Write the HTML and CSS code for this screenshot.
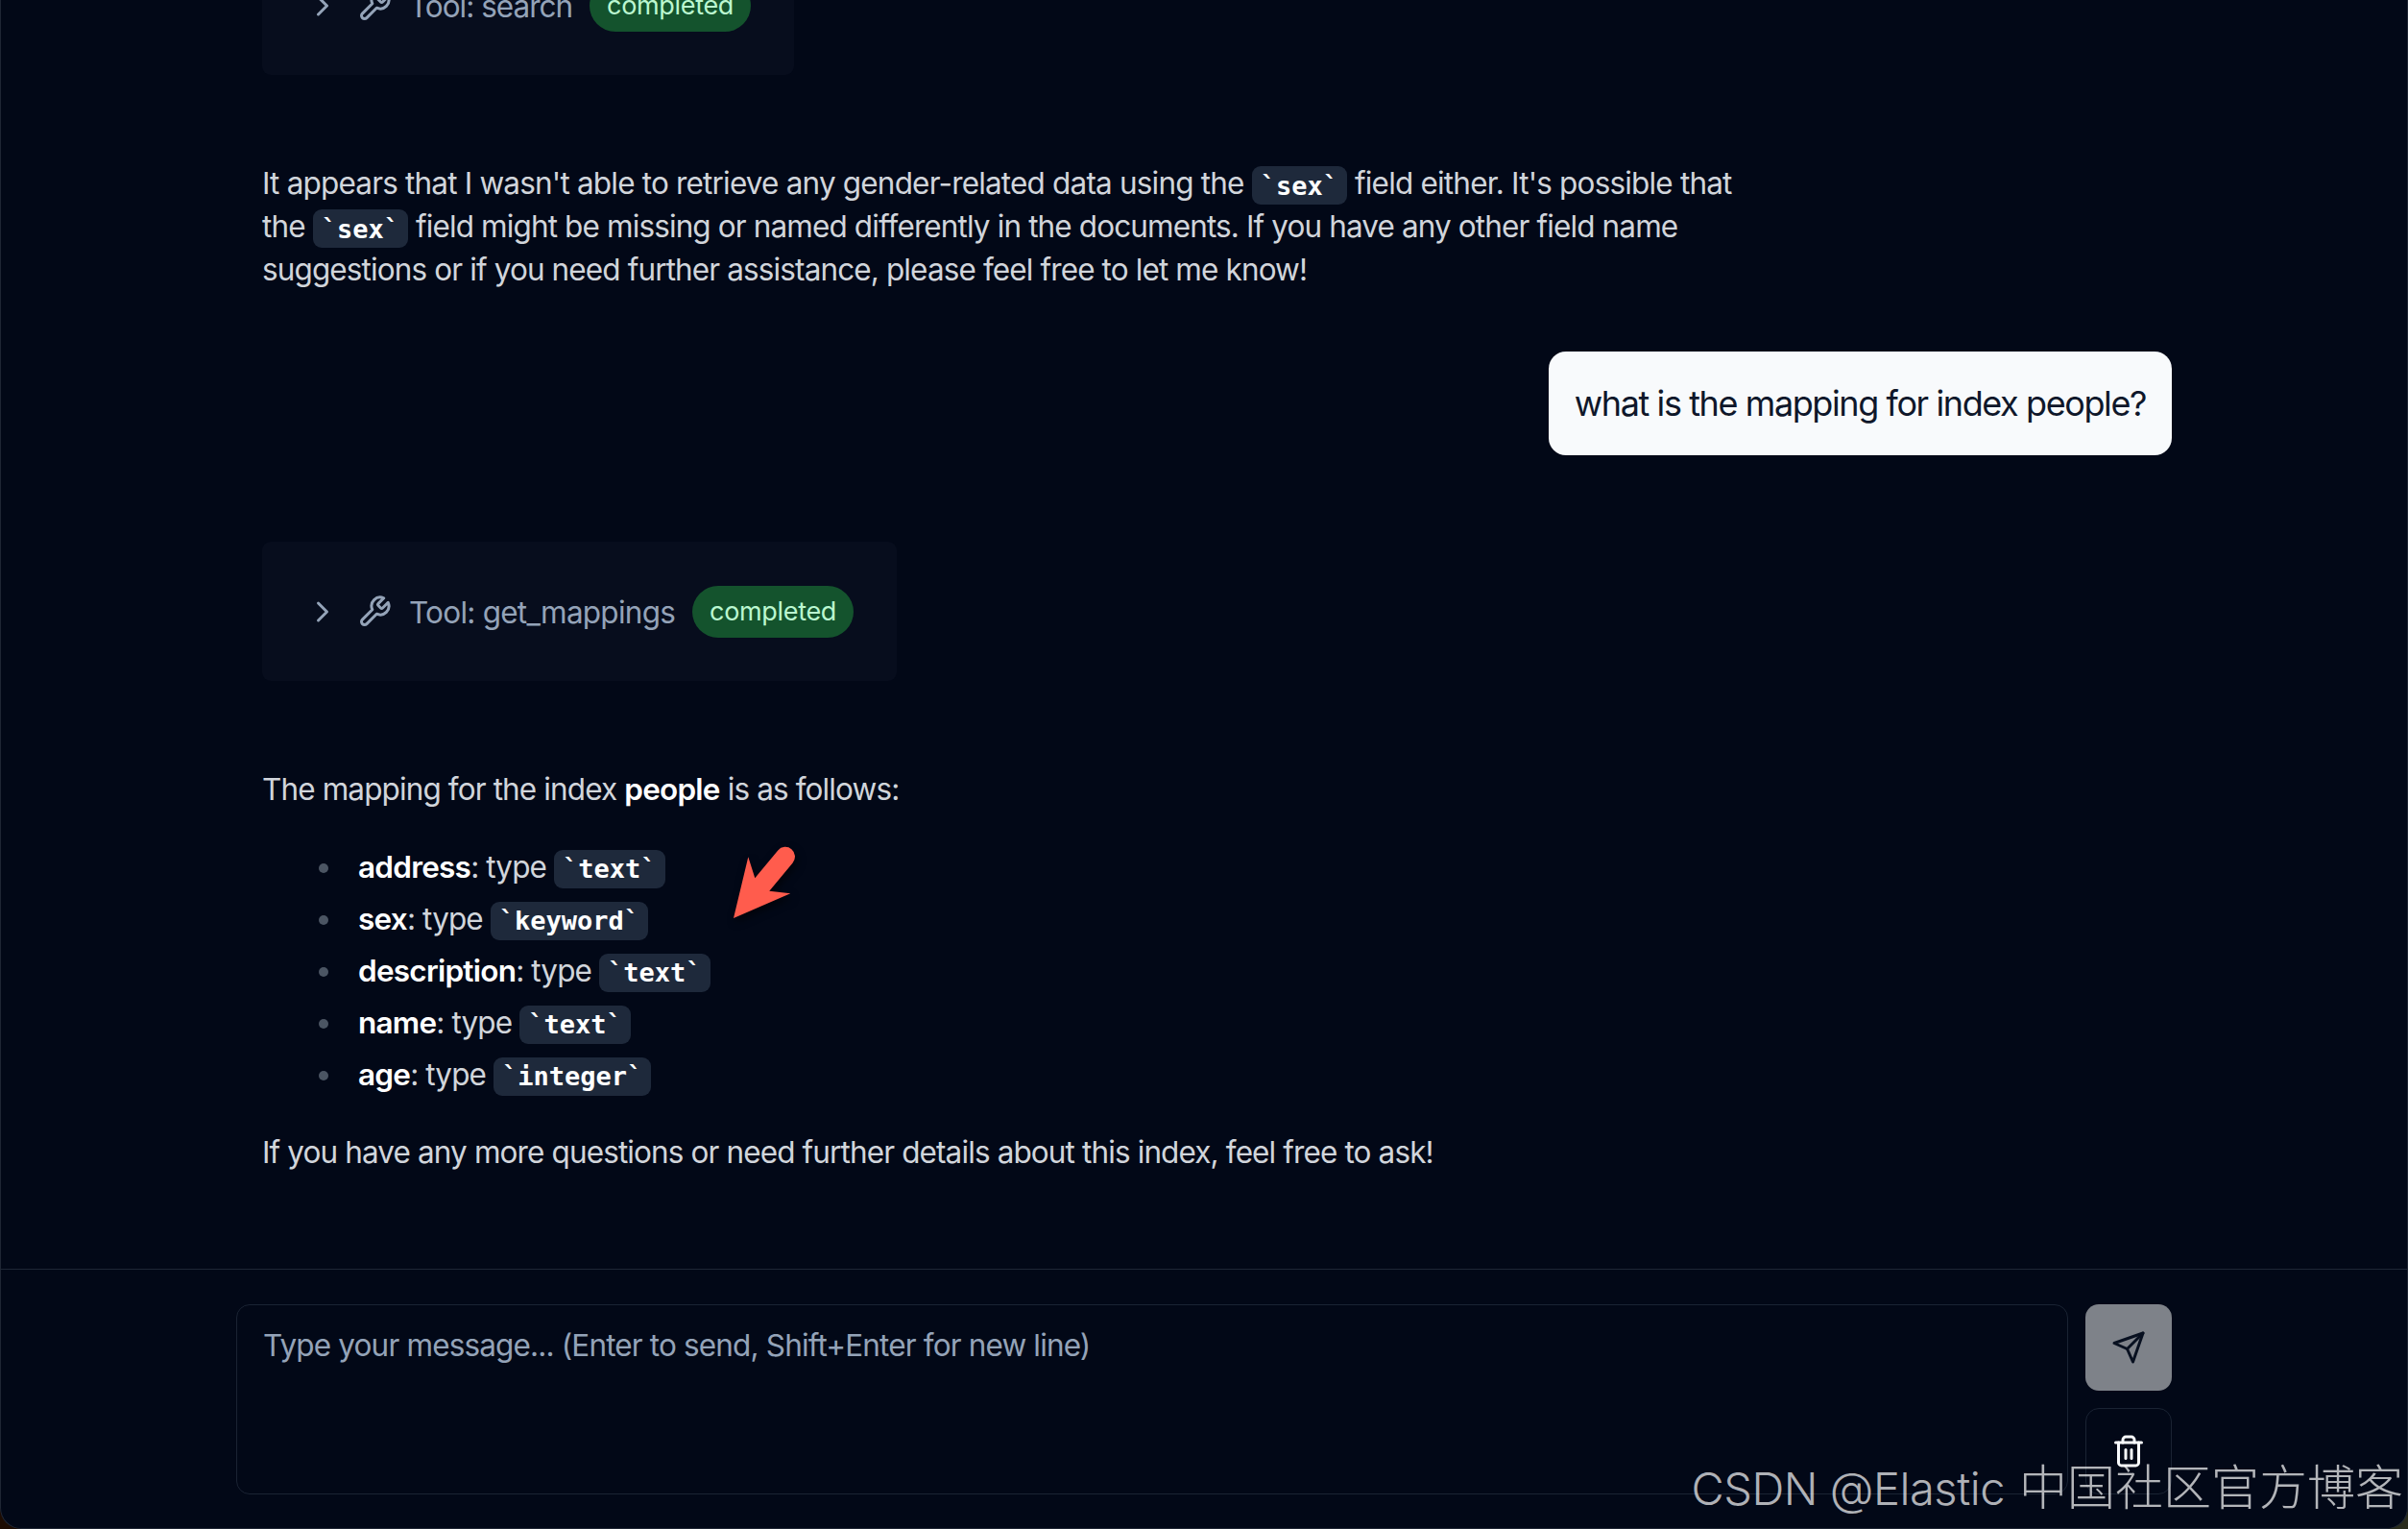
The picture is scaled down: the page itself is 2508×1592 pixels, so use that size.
FILE: index.html
```html
<!DOCTYPE html>
<html lang="en">
<head>
    <meta charset="UTF-8">
    <meta name="viewport" content="width=device-width, initial-scale=1.0">
    <title>Chat</title>
    <link rel="icon" href="data:,">
    <link rel="stylesheet" href="styles.css">
</head>
<body>
    <div class="window">
        <main class="messages">
            <div class="tool-card">
                <svg class="icon" viewBox="0 0 24 24"><path d="m9 18 6-6-6-6"/></svg>
                <svg class="icon" viewBox="0 0 24 24"><path d="M14.7 6.3a1 1 0 0 0 0 1.4l1.6 1.6a1 1 0 0 0 1.4 0l3.77-3.77a6 6 0 0 1-7.94 7.94l-6.91 6.91a2.12 2.12 0 0 1-3-3l6.91-6.91a6 6 0 0 1 7.94-7.94l-3.76 3.76z"/></svg>
                <span class="tool-name">Tool: search</span>
                <span class="badge">completed</span>
            </div>

            <div class="answer">
                <p><span class="loose">It appears that I wasn't able to retrieve any gender-related data using the <code>`sex`</code> field either. It's possible that</span><br>
                the <code>`sex`</code> field might be missing or named differently in the documents. If you have any other field name<br>
                suggestions or if you need further assistance, please feel free to let me know!</p>
            </div>

            <div class="question">what is the mapping for index people?</div>

            <div class="tool-card">
                <svg class="icon" viewBox="0 0 24 24"><path d="m9 18 6-6-6-6"/></svg>
                <svg class="icon" viewBox="0 0 24 24"><path d="M14.7 6.3a1 1 0 0 0 0 1.4l1.6 1.6a1 1 0 0 0 1.4 0l3.77-3.77a6 6 0 0 1-7.94 7.94l-6.91 6.91a2.12 2.12 0 0 1-3-3l6.91-6.91a6 6 0 0 1 7.94-7.94l-3.76 3.76z"/></svg>
                <span class="tool-name long">Tool: get_mappings</span>
                <span class="badge">completed</span>
            </div>

            <div class="answer last">
                <p>The mapping for the index <strong>people</strong> is as follows:</p>
                <ul>
                    <li><strong>address</strong>: type <code>`text`</code></li>
                    <li><strong>sex</strong>: type <code>`keyword`</code></li>
                    <li><strong>description</strong>: type <code>`text`</code></li>
                    <li><strong>name</strong>: type <code>`text`</code></li>
                    <li><strong>age</strong>: type <code>`integer`</code></li>
                </ul>
                <p>If you have any more questions or need further details about this index, feel free to ask!</p>
            </div>
        </main>

        <footer class="composer">
            <div class="input">Type your message... (Enter to send, Shift+Enter for new line)</div>
            <div class="buttons">
                <button class="send" aria-label="Send">
                    <svg class="icon" viewBox="0 0 24 24"><path d="m22 2-7 20-4-9-9-4Z"/><path d="M22 2 11 13"/></svg>
                </button>
                <button class="clear" aria-label="Clear chat">
                    <svg class="icon" viewBox="0 0 24 24"><path d="M3 6h18"/><path d="M19 6v14c0 1-1 2-2 2H7c-1 0-2-1-2-2V6"/><path d="M8 6V4c0-1 1-2 2-2h4c1 0 2 1 2 2v2"/><path d="M10 11v6"/><path d="M14 11v6"/></svg>
                </button>
            </div>
        </footer>
    </div>

    <svg class="arrow" viewBox="0 0 120 120">
        <path d="M24 96 39.3 32.3 46.3 54.3 70.2 25.4A9.9 9.9 0 0 1 85.6 38.4L61.3 67.7 83.3 70.3Z"/>
    </svg>
    <div class="watermark"><span class="latin">CSDN @Elastic</span><span>中国社区官方博客</span></div>
</body>
</html>
```
FILE: styles.css
```css
* {
    box-sizing: border-box;
}
body {
    margin: 0;
    height: 1592px;
    position: relative;
    overflow: hidden;
    background: linear-gradient(to right, #1d0c02 50%, #2a2c1c 50%);
    font-family: Inter, "Liberation Sans", sans-serif;
    font-size: 31.5px;
    line-height: 45px;
    letter-spacing: -0.028em;
    color: #d1d5db;
}
.window {
    height: 1592px;
    display: flex;
    flex-direction: column;
    background: #020817;
    border: 1px solid #1f2634;
    border-top: none;
    border-radius: 0 0 22px 22px;
}
/* newest message stays at the bottom, older ones are cut off at the top */
.messages {
    flex: 1;
    min-height: 0;
    overflow: hidden;
    display: flex;
    flex-direction: column;
    justify-content: flex-end;
    align-items: flex-start;
    padding: 0 245px 99px 272px;
    white-space: nowrap;
}
.messages > * {
    flex-shrink: 0;
}
.icon {
    width: 36px;
    height: 36px;
    flex-shrink: 0;
    fill: none;
    stroke: currentColor;
    stroke-width: 2;
    stroke-linecap: round;
    stroke-linejoin: round;
}
.tool-card {
    display: flex;
    align-items: center;
    gap: 18px;
    height: 145px;
    padding: 1px 45px 0;
    margin-bottom: 90px;
    border-radius: 9px;
    background: #070d1d;
    color: #94a3b8;
}
.tool-name {
    letter-spacing: -0.032em;
}
.tool-name.long {
    letter-spacing: -0.024em;
}
.badge {
    padding: 9px 18px;
    border-radius: 27px;
    background: #14532d;
    color: #bbf7d0;
    font-size: 27px;
    line-height: 36px;
    letter-spacing: -0.012em;
}
.answer {
    margin-bottom: 63px;
}
.answer.last {
    margin-bottom: 0;
}
p {
    margin: 0;
}
.loose {
    letter-spacing: -0.026em;
}
ul {
    margin: 36px 0;
    padding: 0 0 0 59px;
    list-style: none;
    display: flex;
    flex-direction: column;
    gap: 9px;
}
li {
    display: flex;
    align-items: baseline;
    height: 45px;
    white-space: pre;
}
li::before {
    content: "";
    align-self: center;
    width: 10px;
    height: 10px;
    margin: 3px 31px 0 0;
    border-radius: 50%;
    background: #4b5563;
}
strong {
    font-weight: 600;
    letter-spacing: -0.024em;
    color: #fff;
}
code {
    padding: 4.5px 9px;
    border-radius: 9px;
    background: #1e293b;
    color: #fff;
    font: 600 27px/31px "DejaVu Sans Mono", monospace;
    letter-spacing: 0;
}
.question {
    align-self: flex-end;
    padding: 27px;
    margin-bottom: 90px;
    border-radius: 18px;
    background: #f8fafc;
    color: #0f172a;
    font-size: 36px;
    line-height: 54px;
    letter-spacing: -0.039em;
}
.composer {
    display: flex;
    gap: 18px;
    padding: 36px 245px 35px;
    border-top: 1px solid #1e2635;
}
.input {
    flex: 1;
    height: 198px;
    padding: 19px 27px;
    border: 1px solid #1a2333;
    border-radius: 14px;
    color: #94a3b8;
    letter-spacing: -0.027em;
}
.buttons {
    display: flex;
    flex-direction: column;
    gap: 18px;
}
button {
    display: flex;
    align-items: center;
    justify-content: center;
    width: 90px;
    height: 90px;
    padding: 0;
    border: none;
    border-radius: 14px;
}
.send {
    background: #7e8289;
    color: #081020;
}
.clear {
    border: 1px solid #1a2333;
    background: transparent;
    color: #f8fafc;
}
.arrow {
    position: absolute;
    left: 740px;
    top: 860px;
    width: 120px;
    height: 120px;
    fill: #ff5c4d;
    filter: drop-shadow(2px 4px 4px rgba(0, 0, 0, 0.6));
}
.watermark {
    position: absolute;
    right: 5px;
    bottom: 6px;
    display: flex;
    align-items: baseline;
    gap: 15px;
    font-family: "Noto Sans CJK SC", sans-serif;
    font-size: 50px;
    font-weight: 300;
    line-height: 72px;
    letter-spacing: 0;
    color: rgba(255, 255, 255, 0.7);
}
.latin {
    font-family: Inter, sans-serif;
    font-size: 47px;
    font-weight: 300;
    letter-spacing: -0.01em;
}
```
